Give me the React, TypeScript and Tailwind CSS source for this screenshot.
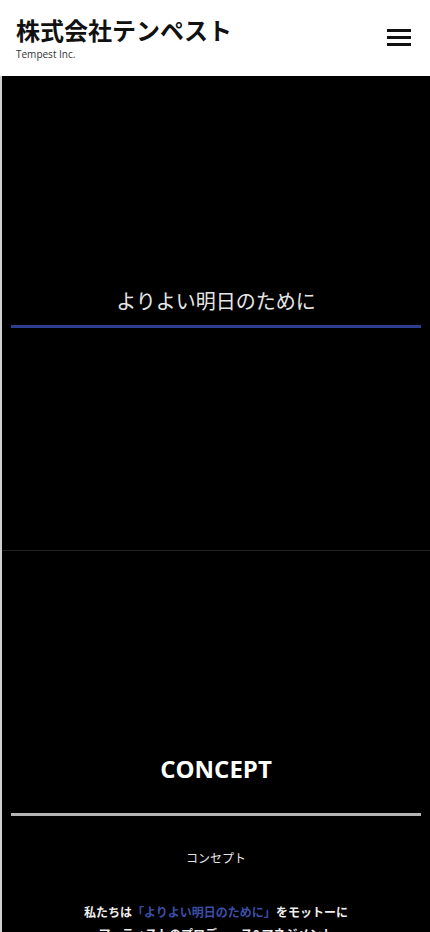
import React from 'react';

const font = { fontFamily: '"Open Sans", "Noto Sans CJK JP", sans-serif' };

const Header: React.FC = () => (
  <header className="flex h-[76px] items-center justify-between bg-white pl-4 pr-[19px]">
    <div className="flex flex-col pt-[1px]">
      <h1 className="text-[24px] leading-[30px] font-semibold text-[#111]">株式会社テンペスト</h1>
      <p className="mt-[1px] text-[10px] leading-[14px] text-[#333]">Tempest Inc.</p>
    </div>
    <button className="flex w-6 flex-col gap-[4px] pb-[2px]" aria-label="menu">
      <span className="h-[3px] w-6 bg-[#111]" />
      <span className="h-[3px] w-6 bg-[#111]" />
      <span className="h-[3px] w-6 bg-[#111]" />
    </button>
  </header>
);

const App: React.FC = () => {
  return (
    <div className="min-h-[932px] bg-black" style={font}>
      <Header />
      <main className="border-l-2 border-[#cfcfcf] bg-black">
        {/* Hero */}
        <section className="flex h-[475px] flex-col items-center border-b border-[#222] pt-[211px]">
          <h2 className="text-[20px] leading-[30px] text-[#e6e6e6]">よりよい明日のために</h2>
          <div className="mt-[8px] h-[3px] w-[410px] bg-[#2d3d8f]" />
        </section>

        {/* Concept */}
        <section className="flex flex-col items-center pt-[202px]">
          <h2 className="text-[24px] leading-[32px] font-bold text-white">CONCEPT</h2>
          <div className="mt-[28px] h-[3px] w-[410px] bg-[#b5b5b5]" />
          <p className="mt-[33px] text-[12px] leading-[20px] text-[#e6e6e6]">コンセプト</p>
          <div className="mt-[33px] text-center text-[12px] leading-[22px] font-bold text-[#eee]">
            <p>
              私たちは<span className="text-[#3b4fa8]">「よりよい明日のために」</span>をモットーに
            </p>
            <p>アーティストのプロデュース&amp;マネジメント</p>
            <p>を通して皆様に夢と感動をお届けします。</p>
          </div>
        </section>
      </main>
    </div>
  );
};

export default App;
